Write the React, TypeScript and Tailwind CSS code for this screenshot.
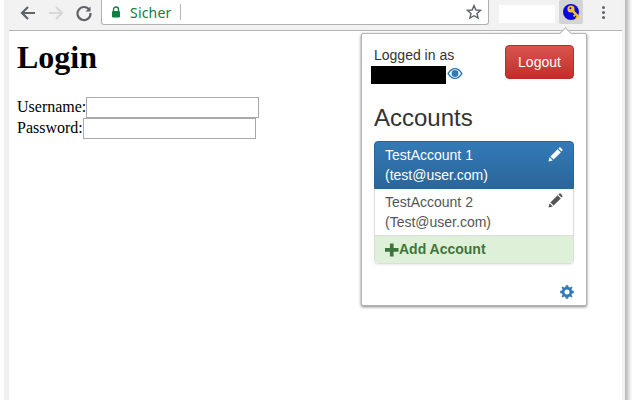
import React from "react";

const Pencil = ({ color }: { color: string }) => (
  <svg width="15" height="15" viewBox="0 0 15 15" fill={color}>
    <path d="M0.5 14.5 L1.6 10.2 L4.8 13.4 Z" />
    <path d="M2.4 9.4 L9.6 2.2 L12.8 5.4 L5.6 12.6 Z" />
    <path d="M10.4 1.4 L11.4 0.5 Q12 0.1 12.6 0.6 L14.4 2.4 Q14.9 3 14.4 3.6 L13.6 4.6 Z" />
  </svg>
);

const Row = ({ name, mail, active }: { name: string; mail: string; active?: boolean }) => (
  <div
    className={
      active
        ? "flex justify-between pl-[10px] pr-[10px] h-[48px] pt-[3px] text-white bg-gradient-to-b from-[#337ab7] to-[#2b669a] rounded-t-[4px] border border-[#2b669a] -mx-px -mt-px"
        : "flex justify-between pl-[10px] pr-[10px] h-[47px] pt-[3px] text-[#555] bg-white border-b border-[#ddd]"
    }
  >
    <div className="leading-[20px]">
      <div>{name}</div>
      <div>{mail}</div>
    </div>
    <div className={active ? "pt-[2px]" : "pt-[1px]"}>
      <Pencil color={active ? "#ffffff" : "#555555"} />
    </div>
  </div>
);

export default function App() {
  return (
    <div className="relative w-[640px] h-[400px] bg-white overflow-hidden flex font-['Liberation_Sans',sans-serif]">
      <div className="w-[4px] bg-white" />
      <div className="w-[5px] bg-[#f1f1f1]" />
      <div className="w-[613px] flex flex-col">
        <div className="h-[31px] bg-[#f2f2f2] border-b border-[#b5b5b5] flex items-start">
          <div className="w-[92px] h-[24px] flex items-center gap-[10px] pl-[10px] mt-[1px] shrink-0">
            <svg width="18" height="18" viewBox="0 0 18 18" fill="none" stroke="#5f6368" strokeWidth="2.2">
              <path d="M16 9 H3 M9 3 L3 9 L9 15" />
            </svg>
            <svg width="18" height="18" viewBox="0 0 18 18" fill="none" stroke="#d8d8d8" strokeWidth="2.2">
              <path d="M2 9 H15 M9 3 L15 9 L9 15" />
            </svg>
            <svg width="18" height="18" viewBox="0 0 18 18" fill="none" stroke="#5f6368" strokeWidth="2.2">
              <path d="M14.5 6 A6.5 6.5 0 1 0 15.5 9" />
              <path d="M15.5 2.5 V7.5 H10.5" fill="#5f6368" stroke="none" />
            </svg>
          </div>
          <div className="w-[388px] h-[25px] bg-white border border-t-0 border-[#b0b0b0] rounded-b-[3px] flex items-center shrink-0">
            <svg className="ml-[9px]" width="10" height="12" viewBox="0 0 10 12">
              <path d="M2.5 5 V3.5 a2.5 2.5 0 0 1 5 0 V5" fill="none" stroke="#0b8043" strokeWidth="1.4" />
              <rect x="1" y="5" width="8" height="6.5" rx="1" fill="#0b8043" />
            </svg>
            <span className="ml-[9px] text-[14px] tracking-[0.2px] text-[#0b8043] font-['Noto_Sans',sans-serif]">Sicher</span>
            <div className="ml-[8px] w-px h-[16px] bg-[#b5b5b5]" />
            <svg className="ml-auto mr-[6px]" width="16" height="16" viewBox="0 0 16 16" fill="none" stroke="#5f6368" strokeWidth="1.4">
              <path d="M8 1.6 L9.9 6 L14.6 6.4 L11 9.5 L12.1 14.1 L8 11.7 L3.9 14.1 L5 9.5 L1.4 6.4 L6.1 6 Z" />
            </svg>
          </div>
          <div className="ml-[10px] mt-[5px] w-[56px] h-[18px] bg-white shrink-0" />
          <div className="ml-[4px] w-[24px] h-[24px] bg-[#d4d4d4] rounded-[2px] flex items-center justify-center shrink-0">
            <svg width="18" height="18" viewBox="0 0 18 18">
              <circle cx="9" cy="9" r="8" fill="#0808e0" />
              <circle cx="9" cy="6" r="3.6" fill="#f5c518" />
              <circle cx="8.4" cy="5.2" r="1" fill="#0808e0" />
              <path d="M10.5 7.5 L16.8 14.5" stroke="#f5c518" strokeWidth="2.6" />
              <path d="M13 12 L11.6 13.4 M15.2 14.2 L13.8 15.6" stroke="#f5c518" strokeWidth="1.8" />
            </svg>
          </div>
          <div className="ml-[19px] mt-[6px] flex flex-col gap-[2px] shrink-0">
            <div className="w-[3px] h-[3px] rounded-full bg-[#5f6368]" />
            <div className="w-[3px] h-[3px] rounded-full bg-[#5f6368]" />
            <div className="w-[3px] h-[3px] rounded-full bg-[#5f6368]" />
          </div>
        </div>
        <div className="pl-[8px] font-['Liberation_Serif',serif] text-black text-[16px] leading-[18px]">
          <h1 className="text-[32px] font-bold leading-[37px] mt-[8px] mb-[21px]">Login</h1>
          <div className="flex items-start h-[21px]">
            <span className="leading-[19px]">Username:</span>
            <div className="w-[173px] h-[21px] border border-[#a9a9a9] bg-white" />
          </div>
          <div className="flex items-start h-[21px]">
            <span className="leading-[19px]">Password:</span>
            <div className="w-[173px] h-[21px] border border-[#a9a9a9] bg-white" />
          </div>
        </div>
      </div>
      <div className="w-[3px] bg-[#f1f1f1]" />
      <div className="w-[7px] bg-gradient-to-r from-[#b4b4b4] to-white" />

      {/* extension popup */}
      <div className="absolute left-[361px] top-[33px] w-[226px] h-[273px] bg-white border border-[#b4b4b4] rounded-[2px] shadow-[0_1px_3px_rgba(0,0,0,0.5)] text-[14px] text-[#333]">
        <div className="absolute -top-[5px] left-[199px] w-[9px] h-[9px] bg-white border-l border-t border-[#b4b4b4] rotate-45" />
        <div className="relative pl-[12px] pr-[12px] pt-[11px]">
          <div className="flex justify-between">
            <div className="leading-[20px]">
              <div>Logged in as</div>
              <div className="flex items-start -ml-[3px] mt-[1px]">
                <div className="w-[75px] h-[18px] bg-black" />
                <svg className="ml-[1px] mt-[1px]" width="16" height="13" viewBox="0 0 16 13" fill="#337ab7">
                  <path fillRule="evenodd" d="M0.3 6.5 C3 2 5.5 1 8 1 C10.5 1 13 2 15.7 6.5 C13 11 10.5 12 8 12 C5.5 12 3 11 0.3 6.5 Z M2 6.5 C4 9.5 6 10.7 8 10.7 C10 10.7 12 9.5 14 6.5 C12 3.5 10 2.3 8 2.3 C6 2.3 4 3.5 2 6.5 Z" />
                  <circle cx="8" cy="6.5" r="3.4" />
                </svg>
              </div>
            </div>
            <div className="w-[69px] h-[34px] rounded-[4px] border border-[#b92c28] bg-gradient-to-b from-[#d9534f] to-[#c12e2a] text-white flex items-center justify-center">
              Logout
            </div>
          </div>
          <div className="text-[24px] leading-[26px] mt-[21px] mb-[10px]">Accounts</div>
          <div className="rounded-[4px] border border-[#ddd] shadow-[0_1px_2px_rgba(0,0,0,0.075)]">
            <Row name="TestAccount 1" mail="(test@user.com)" active />
            <Row name="TestAccount 2" mail="(Test@user.com)" />
            <div className="h-[27px] bg-[#dff0d8] rounded-b-[4px] text-[#3c763d] font-bold flex items-center pl-[10px]">
              <svg width="14" height="14" viewBox="0 0 14 14" fill="#3c763d">
                <path d="M4.9 0.5 H8.6 V5 H13.5 V8.7 H8.6 V13.5 H4.9 V8.7 H0 V5 H4.9 Z" />
              </svg>
              <span>Add Account</span>
            </div>
          </div>
          <div className="flex justify-end mt-[21px]">
            <svg width="14" height="14" viewBox="0 0 14 14" fill="#337ab7">
              <path fillRule="evenodd" d="M5.8 0.2 H8.2 L8.6 2 L9.9 2.5 L11.5 1.5 L12.5 2.5 L11.5 4.1 L12 5.4 L13.8 5.8 V8.2 L12 8.6 L11.5 9.9 L12.5 11.5 L11.5 12.5 L9.9 11.5 L8.6 12 L8.2 13.8 H5.8 L5.4 12 L4.1 11.5 L2.5 12.5 L1.5 11.5 L2.5 9.9 L2 8.6 L0.2 8.2 V5.8 L2 5.4 L2.5 4.1 L1.5 2.5 L2.5 1.5 L4.1 2.5 L5.4 2 Z M7 4.5 A2.5 2.5 0 1 0 7 9.5 A2.5 2.5 0 1 0 7 4.5 Z" />
            </svg>
          </div>
        </div>
      </div>
    </div>
  );
}
